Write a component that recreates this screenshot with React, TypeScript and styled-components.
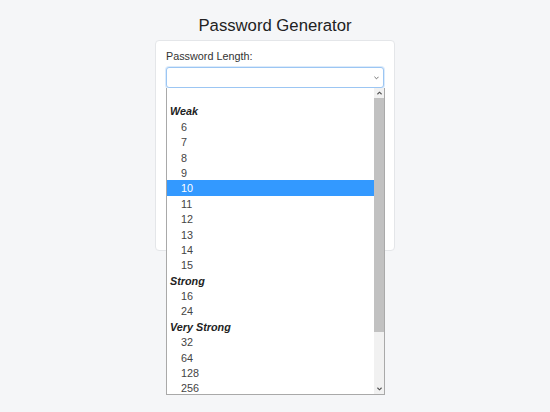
import styled, { createGlobalStyle } from "styled-components";

const GlobalStyle = createGlobalStyle`
  html, body {
    margin: 0;
    padding: 0;
    background: #f5f6f8;
    font-family: "Liberation Sans", Arial, sans-serif;
  }
`;

type Row =
  | { kind: "blank" }
  | { kind: "group"; label: string }
  | { kind: "option"; value: number };

const groups: { label: string; values: number[] }[] = [
  { label: "Weak", values: [6, 7, 8, 9, 10, 11, 12, 13, 14, 15] },
  { label: "Strong", values: [16, 24] },
  { label: "Very Strong", values: [32, 64, 128, 256] },
];

const rows: Row[] = [
  { kind: "blank" },
  ...groups.flatMap((g): Row[] => [
    { kind: "group", label: g.label },
    ...g.values.map((v): Row => ({ kind: "option", value: v })),
  ]),
];

const HIGHLIGHTED = 10;

const App = () => {
  return (
    <>
      <GlobalStyle />
      <Page>
        <Title>Password Generator</Title>
        <Card>
          <Label>Password Length:</Label>
          <SelectWrap>
            <SelectBox>
              <Chevron viewBox="0 0 6 4" width={5} height={4}>
                <path d="M0.5 0.5 L3 3 L5.5 0.5" fill="none" stroke="#555" strokeWidth="1" />
              </Chevron>
            </SelectBox>
            <Dropdown>
              <List>
                {rows.map((row, i) => {
                  if (row.kind === "blank") return <Item key={i} />;
                  if (row.kind === "group") return <GroupLabel key={i}>{row.label}</GroupLabel>;
                  return (
                    <Item key={i} $active={row.value === HIGHLIGHTED}>
                      {row.value}
                    </Item>
                  );
                })}
              </List>
              <Scrollbar>
                <ScrollButton>
                  <svg viewBox="0 0 6 4" width={5} height={4}>
                    <path d="M0.5 3.5 L3 1 L5.5 3.5" fill="none" stroke="#505050" strokeWidth="1.3" />
                  </svg>
                </ScrollButton>
                <Thumb />
                <Track />
                <ScrollButton>
                  <svg viewBox="0 0 6 4" width={5} height={4}>
                    <path d="M0.5 0.5 L3 3 L5.5 0.5" fill="none" stroke="#505050" strokeWidth="1.3" />
                  </svg>
                </ScrollButton>
              </Scrollbar>
            </Dropdown>
          </SelectWrap>
        </Card>
      </Page>
    </>
  );
};

export default App;

const Page = styled.div`
  display: flex;
  flex-direction: column;
  align-items: center;
  padding-top: 16px;
  height: 412px;
  box-sizing: border-box;
`;

const Title = styled.h1`
  margin: 0 0 4px;
  font-size: 16.7px;
  line-height: 20px;
  font-weight: 400;
  color: #222;
`;

const Card = styled.div`
  width: 240px;
  height: 211px;
  box-sizing: border-box;
  background: #fff;
  border: 1px solid #e4e6e9;
  border-radius: 4px;
  padding: 9px 10px 10px;
`;

const Label = styled.div`
  font-size: 10.8px;
  line-height: 13px;
  color: #333;
  margin-bottom: 4px;
`;

const SelectWrap = styled.div`
  position: relative;
`;

const SelectBox = styled.div`
  height: 21px;
  box-sizing: border-box;
  border: 1px solid #9cc6f3;
  border-radius: 3px;
  box-shadow: 0 0 0 1px rgba(156, 198, 243, 0.35);
  display: flex;
  align-items: center;
  justify-content: flex-end;
  padding-right: 4px;
  background: #fff;
`;

const Chevron = styled.svg`
  display: block;
  margin-top: 1px;
`;

const Dropdown = styled.div`
  position: absolute;
  top: 100%;
  left: 0;
  width: 219px;
  height: 307px;
  box-sizing: border-box;
  border: 1px solid #a9a9a9;
  border-top: none;
  background: #fff;
  display: flex;
  overflow: hidden;
  z-index: 2;
`;

const List = styled.div`
  flex: 1;
  overflow: hidden;
  font-size: 10.8px;
  color: #444;
`;

const Item = styled.div<{ $active?: boolean }>`
  height: 15.4px;
  box-sizing: border-box;
  padding-top: 1px;
  line-height: 15.4px;
  padding-left: 14px;
  background: ${({ $active }) => ($active ? "#3399ff" : "transparent")};
  color: ${({ $active }) => ($active ? "#fff" : "inherit")};
`;

const GroupLabel = styled.div`
  height: 15.4px;
  box-sizing: border-box;
  padding-top: 1px;
  line-height: 15.4px;
  padding-left: 3px;
  font-weight: 700;
  font-style: italic;
  color: #222;
`;

const Scrollbar = styled.div`
  width: 10px;
  display: flex;
  flex-direction: column;
  background: #f1f1f1;
`;

const ScrollButton = styled.div`
  height: 10px;
  flex-shrink: 0;
  display: flex;
  align-items: center;
  justify-content: center;
  background: #f1f1f1;
`;

const Thumb = styled.div`
  height: 234px;
  flex-shrink: 0;
  background: #c1c1c1;
`;

const Track = styled.div`
  flex: 1;
`;
